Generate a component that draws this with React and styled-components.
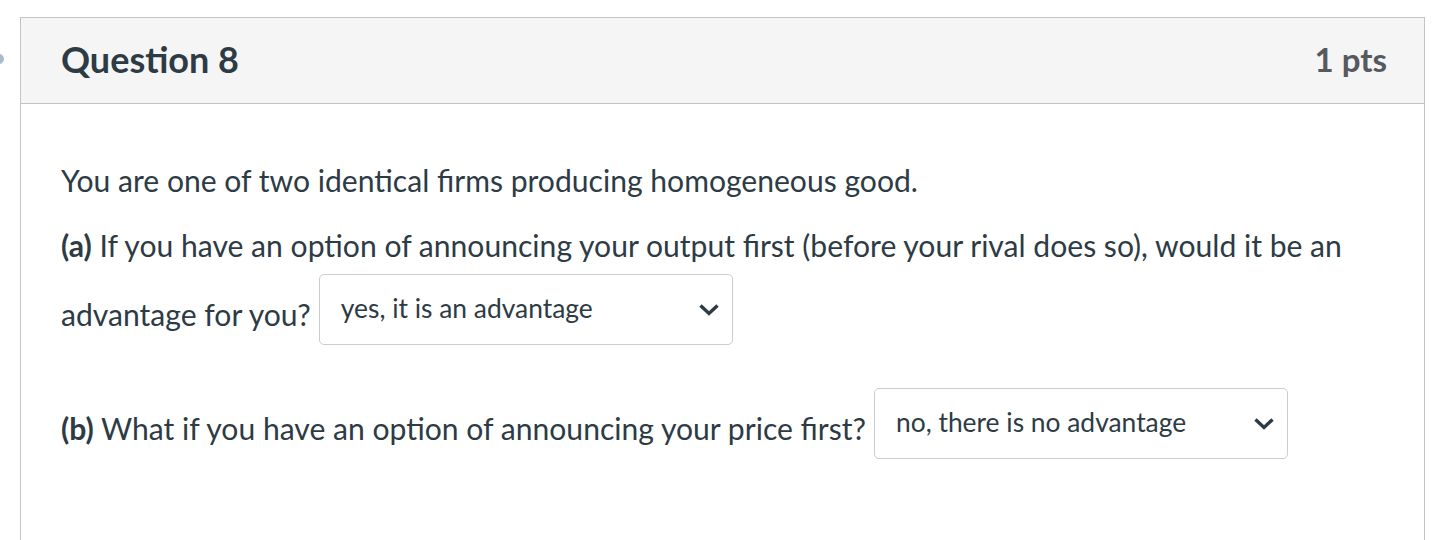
import styled, { createGlobalStyle } from 'styled-components';

const GlobalStyle = createGlobalStyle`
  body {
    margin: 0;
    background: #fff;
    font-family: Lato, "Open Sans", sans-serif;
    color: #2d3b45;
  }
`;

const Page = styled.div`
  position: relative;
  padding: 17px 13px 0 20px;
  height: 540px;
  box-sizing: border-box;
  overflow: hidden;
`;

const Marker = styled.span`
  position: absolute;
  left: -6px;
  top: 54px;
  width: 10px;
  height: 10px;
  border-radius: 50%;
  background: #a9bccd;
`;

const Card = styled.div`
  border: 1px solid #c4c4c4;
  border-bottom: none;
  height: 600px;
`;

const Header = styled.div`
  display: flex;
  align-items: center;
  justify-content: space-between;
  box-sizing: border-box;
  height: 86px;
  padding: 0 37px 3px 40px;
  background: #f5f5f5;
  border-bottom: 1px solid #c4c4c4;
`;

const Title = styled.h2`
  margin: 0;
  font-size: 36px;
  font-weight: 700;
  color: #2d3b45;
`;

const Points = styled.span`
  font-size: 33px;
  font-weight: 700;
  color: #555a5e;
`;

const Body = styled.div`
  padding: 54px 40px 0 40px;
  font-size: 30.1px;
  line-height: 45px;
`;

const Para = styled.p`
  margin: 0 0 20px 0;
`;

const Select = styled.span`
  display: inline-flex;
  align-items: center;
  justify-content: space-between;
  box-sizing: border-box;
  width: ${(p) => p.width}px;
  height: 71px;
  margin: 6px 0 17px 8px;
  padding: 0 12px 3px 21px;
  border: 1px solid #c7cdd1;
  border-radius: 5px;
  vertical-align: 8px;
  font-size: 26.4px;
  line-height: 1;
  color: #2d3b45;
  background: #fff;
`;

const Chevron = () => (
  <svg width="22" height="14" viewBox="0 0 22 14" style={{ marginTop: 4 }}>
    <path d="M2.5 2.5 L11 10.5 L19.5 2.5" fill="none" stroke="#2d3b45" strokeWidth="3.4" />
  </svg>
);

export default function App() {
  return (
    <>
      <GlobalStyle />
      <Page>
        <Marker />
        <Card>
          <Header>
            <Title>Question 8</Title>
            <Points>1 pts</Points>
          </Header>
          <Body>
            <Para>You are one of two identical firms producing homogeneous good.</Para>
            <Para>
              <strong>(a)</strong> If you have an option of announcing your output first (before your rival does so), would it be an advantage for you?
              <Select width={414}>
                <span>yes, it is an advantage</span>
                <Chevron />
              </Select>
            </Para>
            <Para>
              <strong>(b)</strong> What if you have an option of announcing your price first?
              <Select width={414}>
                <span>no, there is no advantage</span>
                <Chevron />
              </Select>
            </Para>
          </Body>
        </Card>
      </Page>
    </>
  );
}
